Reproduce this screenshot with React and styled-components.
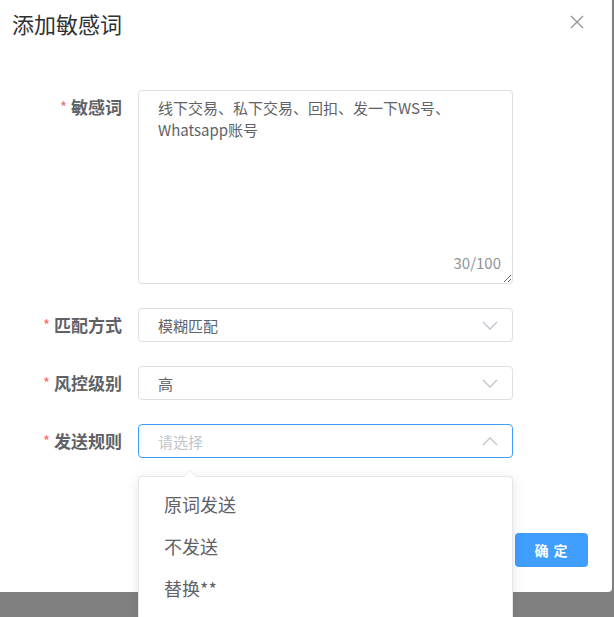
import React from 'react'
import styled, { createGlobalStyle } from 'styled-components'

const GlobalStyle = createGlobalStyle`
  html, body {
    margin: 0;
    height: 100%;
    overflow: hidden;
    background: #808080;
  }
  body {
    font-family: "Noto Sans CJK SC", "Liberation Sans", sans-serif;
  }
`

const Chevron = ({ up }) => (
  <svg width="16" height="9" viewBox="0 0 16 9" fill="none">
    <path
      d={up ? 'M1 8 L8 1 L15 8' : 'M1 1 L8 8 L15 1'}
      stroke="#c0c4cc"
      strokeWidth="1.3"
    />
  </svg>
)

const CloseIcon = () => (
  <svg width="14" height="14" viewBox="0 0 14 14">
    <path d="M1 1 L13 13 M13 1 L1 13" stroke="#909399" strokeWidth="1.3" />
  </svg>
)

const options = ['原词发送', '不发送', '替换**']

const App = () => (
  <>
    <GlobalStyle />
    <Dialog>
      <Header>
        <Title>添加敏感词</Title>
        <CloseButton>
          <CloseIcon />
        </CloseButton>
      </Header>
      <Form>
        <FormItem>
          <Label>
            <Star>*</Star>敏感词
          </Label>
          <Field>
            <TextareaWrap>
              <Textarea
                readOnly
                value={'线下交易、私下交易、回扣、发一下WS号、Whatsapp账号'}
              />
              <Counter>30/100</Counter>
            </TextareaWrap>
          </Field>
        </FormItem>
        <FormItem>
          <Label>
            <Star>*</Star>匹配方式
          </Label>
          <Field>
            <Select>
              <SelectValue>模糊匹配</SelectValue>
              <Chevron />
            </Select>
          </Field>
        </FormItem>
        <FormItem>
          <Label>
            <Star>*</Star>风控级别
          </Label>
          <Field>
            <Select>
              <SelectValue>高</SelectValue>
              <Chevron />
            </Select>
          </Field>
        </FormItem>
        <FormItem>
          <Label>
            <Star>*</Star>发送规则
          </Label>
          <Field>
            <Select focused>
              <SelectValue placeholder>请选择</SelectValue>
              <Chevron up />
            </Select>
            <Popper>
              {options.map((o) => (
                <Option key={o}>{o}</Option>
              ))}
            </Popper>
          </Field>
        </FormItem>
      </Form>
      <Footer>
        <PrimaryButton>确 定</PrimaryButton>
      </Footer>
    </Dialog>
  </>
)

const Dialog = styled.div`
  width: 612px;
  height: 592px;
  background: #fff;
  border-radius: 0 0 4px 0;
  display: flex;
  flex-direction: column;
  box-sizing: border-box;
`

const Header = styled.div`
  display: flex;
  align-items: flex-start;
  justify-content: space-between;
  padding: 8px 28px 0 12px;
`

const Title = styled.span`
  font-size: 22px;
  line-height: 30px;
  color: #303133;
`

const CloseButton = styled.span`
  display: flex;
  margin-top: 7px;
`

const Form = styled.div`
  padding-top: 52px;
  display: flex;
  flex-direction: column;
  gap: 24px;
`

const FormItem = styled.div`
  display: flex;
  align-items: flex-start;
`

const Label = styled.label`
  width: 138px;
  padding-right: 16px;
  box-sizing: border-box;
  text-align: right;
  font-size: 17px;
  font-weight: 700;
  line-height: 34px;
  color: #606266;
`

const Star = styled.span`
  color: #f56c6c;
  font-size: 15px;
  font-weight: 400;
  margin-right: 4px;
  vertical-align: top;
`

const Field = styled.div`
  position: relative;
  width: 375px;
`

const TextareaWrap = styled.div`
  position: relative;
  height: 194px;
`

const Textarea = styled.textarea`
  display: block;
  width: 100%;
  height: 100%;
  box-sizing: border-box;
  border: 1px solid #dcdfe6;
  border-radius: 4px;
  padding: 6px 19px;
  font-family: inherit;
  font-size: 15px;
  line-height: 22px;
  color: #606266;
  resize: vertical;
  outline: none;
`

const Counter = styled.span`
  position: absolute;
  right: 12px;
  bottom: 12px;
  font-size: 15px;
  line-height: 18px;
  color: #909399;
  background: #fff;
`

const Select = styled.div`
  height: 34px;
  box-sizing: border-box;
  border: 1px solid ${(p) => (p.focused ? '#409eff' : '#dcdfe6')};
  border-radius: 4px;
  display: flex;
  align-items: center;
  justify-content: space-between;
  padding: 0 14px 0 19px;
`

const SelectValue = styled.span`
  font-size: 15px;
  color: ${(p) => (p.placeholder ? '#c0c4cc' : '#606266')};
`

const Popper = styled.div`
  position: absolute;
  top: calc(100% + 18px);
  left: 0;
  width: 375px;
  box-sizing: border-box;
  height: 142px;
  padding: 6px 0 0;
  background: #fff;
  border: 1px solid #e4e7ed;
  border-bottom: none;
  border-radius: 4px 4px 0 0;
  box-shadow: 0 2px 12px rgba(0, 0, 0, 0.1);
  z-index: 10;

  &::before,
  &::after {
    content: '';
    position: absolute;
    left: 45px;
    border: 6px solid transparent;
    border-top-width: 0;
  }
  &::before {
    top: -7px;
    border-bottom-color: #e4e7ed;
  }
  &::after {
    top: -6px;
    border-bottom-color: #fff;
  }
`

const Option = styled.div`
  height: 42px;
  line-height: 42px;
  padding: 0 25px;
  font-size: 18px;
  color: #606266;
`

const Footer = styled.div`
  margin-top: auto;
  display: flex;
  justify-content: flex-end;
  padding: 0 24px 25px;
`

const PrimaryButton = styled.button`
  width: 73px;
  height: 34px;
  border: none;
  border-radius: 4px;
  background: #409eff;
  color: #fff;
  font-family: inherit;
  font-size: 14px;
  font-weight: 700;
  letter-spacing: 1px;
`

export default App
